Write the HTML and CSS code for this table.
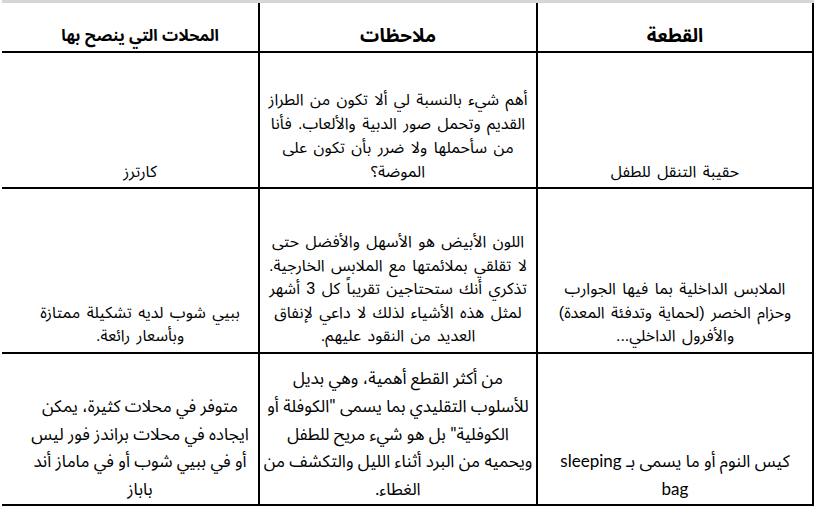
FILE: index.html
```html
<!DOCTYPE html>
<html lang="ar" dir="rtl">
<head>
<meta charset="utf-8">
<title>قائمة مستلزمات الطفل</title>
<link rel="stylesheet" href="styles.css">
</head>
<body>
<div class="topbar"></div>
<div class="sheet">
  <div class="cell head big">القطعة</div>
  <div class="cell head big">ملاحظات</div>
  <div class="cell head small shop">المحلات التي ينصح بها</div>

  <div class="cell r1">حقيبة التنقل للطفل</div>
  <div class="cell r1">أهم شيء بالنسبة لي ألا تكون من الطراز<br>القديم وتحمل صور الدبية والألعاب. فأنا<br>من سأحملها ولا ضرر بأن تكون على<br>الموضة؟</div>
  <div class="cell r1 shop">كارترز</div>

  <div class="cell r2">الملابس الداخلية بما فيها الجوارب<br>وحزام الخصر (لحماية وتدفئة المعدة)<br>والأفرول الداخلي...</div>
  <div class="cell r2">اللون الأبيض هو الأسهل والأفضل حتى<br>لا تقلقي بملائمتها مع الملابس الخارجية.<br>تذكري أنك ستحتاجين تقريباً كل 3 أشهر<br>لمثل هذه الأشياء لذلك لا داعي لإنفاق<br>العديد من النقود عليهم.</div>
  <div class="cell r2 shop">ببيي شوب لديه تشكيلة ممتازة<br>وبأسعار رائعة.</div>

  <div class="cell r3">كيس النوم أو ما يسمى بـ sleeping<br>bag</div>
  <div class="cell r3">من أكثر القطع أهمية، وهي بديل<br>للأسلوب التقليدي بما يسمى "الكوفلة أو<br>الكوفلية" بل هو شيء مريح للطفل<br>ويحميه من البرد أثناء الليل والتكشف من<br>الغطاء.</div>
  <div class="cell r3 shop">متوفر في محلات كثيرة، يمكن<br>ايجاده في محلات براندز فور ليس<br>أو في ببيي شوب أو في ماماز أند<br>باباز</div>
</div>
</body>
</html>
```
FILE: styles.css
```css
html, body {
  margin: 0;
  padding: 0;
  background: #ffffff;
}

body {
  width: 814px;
  height: 506px;
  overflow: hidden;
  font-family: "Liberation Sans", "Noto Sans Arabic", "DejaVu Sans", sans-serif;
  color: #000;
}

.topbar {
  height: 3px;
  width: 812px;
  background: #d6d6d6;
}

.sheet {
  display: grid;
  direction: rtl;
  width: 810px;
  grid-template-columns: 274px 276px 256px;
  grid-template-rows: 48px 134px 163px 150px;
  gap: 2px;
  padding: 0 2px 2px 0;
  background: #000;
}

.cell {
  background: #fff;
  display: flex;
  flex-direction: column;
  justify-content: flex-end;
  align-items: center;
  text-align: center;
  white-space: nowrap;
  font-size: 16px;
  word-spacing: 2px;
}

.shop {
  padding-left: 20px;
}

.head {
  font-weight: bold;
  line-height: 22px;
  padding-bottom: 4px;
  word-spacing: 0;
}

.head.big {
  font-size: 19px;
}

.head.small {
  font-size: 16px;
}

.r1 {
  line-height: 24px;
  padding-bottom: 3px;
}

.r2 {
  line-height: 23.6px;
  padding-bottom: 4px;
}

.r3 {
  font-family: "Lato", "Noto Sans Arabic", "DejaVu Sans", sans-serif;
  font-size: 17px;
  word-spacing: 0;
  line-height: 27.8px;
  padding-bottom: 1px;
}
```
